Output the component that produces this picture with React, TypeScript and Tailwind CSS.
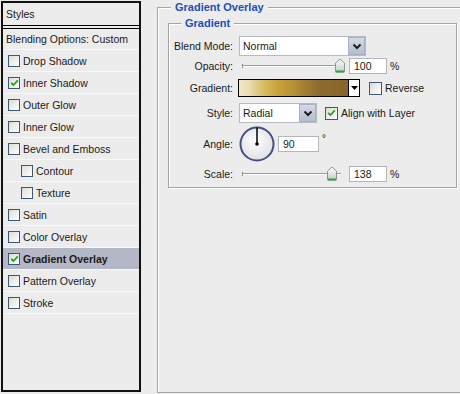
import React from "react";

type Item = { label: string; checked?: boolean; indent?: boolean; active?: boolean };

const items: Item[] = [
  { label: "Drop Shadow" },
  { label: "Inner Shadow", checked: true },
  { label: "Outer Glow" },
  { label: "Inner Glow" },
  { label: "Bevel and Emboss" },
  { label: "Contour", indent: true },
  { label: "Texture", indent: true },
  { label: "Satin" },
  { label: "Color Overlay" },
  { label: "Gradient Overlay", checked: true, active: true },
  { label: "Pattern Overlay" },
  { label: "Stroke" },
];

function Check({ checked, size = 12 }: { checked?: boolean; size?: number }) {
  return (
    <span
      className={
        "flex shrink-0 items-center justify-center border border-[#3f5872] bg-gradient-to-br from-[#dcdcd6] to-white " +
        (size === 13 ? "h-[13px] w-[13px]" : "h-[12px] w-[12px]")
      }
    >
      {checked && (
        <svg width="9" height="8" viewBox="0 0 9 8">
          <path d="M1.2 3.8 L3.4 6 L7.8 1.4" stroke="#21a321" strokeWidth="1.8" fill="none" />
        </svg>
      )}
    </span>
  );
}

function Arrow() {
  return (
    <span className="flex h-full w-[17px] shrink-0 items-center justify-center border border-[#a9b1c2] bg-gradient-to-b from-[#d3d9e6] to-[#b6bdcf]">
      <svg width="10" height="7" viewBox="0 0 10 7">
        <path d="M1.5 1.5 L5 5 L8.5 1.5" stroke="#1d1d1d" strokeWidth="2" fill="none" />
      </svg>
    </span>
  );
}

function Select({ value, width }: { value: string; width: string }) {
  return (
    <div className={"flex h-[20px] items-stretch border border-[#b5bbc3] bg-white " + width}>
      <span className="flex flex-1 items-center pl-[3px]">{value}</span>
      <Arrow />
    </div>
  );
}

function Field({ value, width = "w-[38px]" }: { value: string; width?: string }) {
  return (
    <div className={"flex h-[16px] items-center border border-[#b3b7bd] bg-white pl-[4px] " + width}>
      {value}
    </div>
  );
}

function Slider({ thumb }: { thumb: number }) {
  return (
    <svg width="110" height="16" viewBox="0 0 110 16" className="shrink-0">
      <defs>
        <linearGradient id={"th" + thumb} x1="0" y1="0" x2="0" y2="1">
          <stop offset="0" stopColor="#ffffff" />
          <stop offset="1" stopColor="#c3cbc3" />
        </linearGradient>
      </defs>
      <line x1="3" y1="7.5" x2="102" y2="7.5" stroke="#9c9c9c" />
      <line x1="3" y1="8.5" x2="102" y2="8.5" stroke="#ffffff" />
      <line x1="3.5" y1="6" x2="3.5" y2="10" stroke="#8c8c8c" />
      <path
        d={`M${thumb - 4.5} 5 L${thumb} 1 L${thumb + 4.5} 5 L${thumb + 4.5} 14 L${thumb - 4.5} 14 Z`}
        fill={`url(#th${thumb})`}
        stroke="#8c988c"
      />
      <line x1={thumb - 4} y1="13.5" x2={thumb + 4} y2="13.5" stroke="#3b9c49" strokeWidth="2" />
    </svg>
  );
}

function Label({ text }: { text: string }) {
  return <span className="w-[64px] shrink-0 pr-0 text-right">{text}</span>;
}

export default function App() {
  return (
    <div className="flex h-[394px] w-[460px] overflow-hidden bg-[#ececec] font-['Liberation_Sans',Arial,sans-serif] text-[10.5px] leading-[14px] text-[#1a1a1a]">
      <div className="ml-[1px] mt-[1px] flex h-[391px] w-[140px] shrink-0 flex-col border-2 border-[#111]">
        <div className="flex h-[23px] shrink-0 items-center border-b border-black pl-[3px]">Styles</div>
        <div className="mt-[2px] flex h-[22px] shrink-0 items-center border-b border-t border-b-[#f8f8f8] border-t-black pl-[3px]">
          Blending Options: Custom
        </div>
        {items.map((it) => (
          <div
            key={it.label}
            className={
              "flex h-[22px] shrink-0 items-center gap-[3px] border-b border-[#f8f8f8] " +
              (it.indent ? "pl-[18px] " : "pl-[5px] ") +
              (it.active ? "bg-[#b4b7c5] font-bold" : "")
            }
          >
            <Check checked={it.checked} />
            <span>{it.label}</span>
          </div>
        ))}
      </div>

      <fieldset className="ml-[16px] h-[393px] w-[320px] shrink-0 border border-[#a4a4a4] pl-[10px] shadow-[inset_1px_1px_0_#fff]">
        <legend className="ml-[3px] bg-[#ececec] px-[4px] text-[11px] font-bold leading-[14px] text-[#1c4fbd]">
          Gradient Overlay
        </legend>
        <fieldset className="mt-[2px] w-[289px] border border-[#a4a4a4] pb-[5px] shadow-[inset_1px_1px_0_#fff,1px_1px_0_#fff]">
          <legend className="ml-[12px] bg-[#ececec] px-[4px] text-[11px] font-bold leading-[14px] text-[#1c4fbd]">
            Gradient
          </legend>

          <div className="mt-[6px] flex h-[20px] items-center">
            <Label text="Blend Mode:" />
            <div className="ml-[6px]">
              <Select value="Normal" width="w-[127px]" />
            </div>
          </div>

          <div className="mt-[2px] flex h-[16px] items-center">
            <Label text="Opacity:" />
            <div className="ml-[6px] flex items-center">
              <Slider thumb={101} />
              <Field value="100" />
              <span className="ml-[3px]">%</span>
            </div>
          </div>

          <div className="mt-[5px] flex h-[18px] items-center">
            <Label text="Gradient:" />
            <div className="ml-[5px] flex h-[18px] w-[122px] border border-black bg-white">
              <span className="flex-1 bg-[linear-gradient(to_right,#f3e9c9_0%,#eadbae_10%,#d9bd67_22%,#c7a236_36%,#bb9334_48%,#a47e32_60%,#8d6a2e_74%,#87642b_100%)]" />
              <span className="flex w-[11px] items-center justify-center border-l border-black">
                <svg width="7" height="4" viewBox="0 0 7 4">
                  <path d="M0 0 H7 L3.5 4 Z" fill="#000" />
                </svg>
              </span>
            </div>
            <div className="ml-[9px] flex items-center gap-[3px]">
              <Check size={13} />
              <span>Reverse</span>
            </div>
          </div>

          <div className="mt-[6px] flex h-[20px] items-center">
            <Label text="Style:" />
            <div className="ml-[6px]">
              <Select value="Radial" width="w-[78px]" />
            </div>
            <div className="ml-[8px] flex items-center gap-[3px]">
              <Check checked size={13} />
              <span>Align with Layer</span>
            </div>
          </div>

          <div className="mt-[3px] flex h-[36px] items-center">
            <Label text="Angle:" />
            <svg width="36" height="36" viewBox="0 0 36 36" className="ml-[6px] shrink-0">
              <defs>
                <radialGradient id="dial" cx="0.45" cy="0.4" r="0.6">
                  <stop offset="0" stopColor="#ffffff" />
                  <stop offset="1" stopColor="#e0e0e6" />
                </radialGradient>
              </defs>
              <circle cx="18" cy="18" r="16.5" fill="url(#dial)" stroke="#46507e" strokeWidth="2" />
              <line x1="18" y1="18" x2="18" y2="1.5" stroke="#000" strokeWidth="1.5" />
              <circle cx="18" cy="18" r="1.8" fill="#000" />
            </svg>
            <div className="ml-[3px]">
              <Field value="90" width="w-[41px]" />
            </div>
            <span className="ml-[3px] self-start pt-[6px] text-[10px]">°</span>
          </div>

          <div className="mt-[4px] flex h-[16px] items-center">
            <Label text="Scale:" />
            <div className="ml-[6px] flex items-center">
              <Slider thumb={93} />
              <Field value="138" />
              <span className="ml-[3px]">%</span>
            </div>
          </div>
        </fieldset>
      </fieldset>
    </div>
  );
}
